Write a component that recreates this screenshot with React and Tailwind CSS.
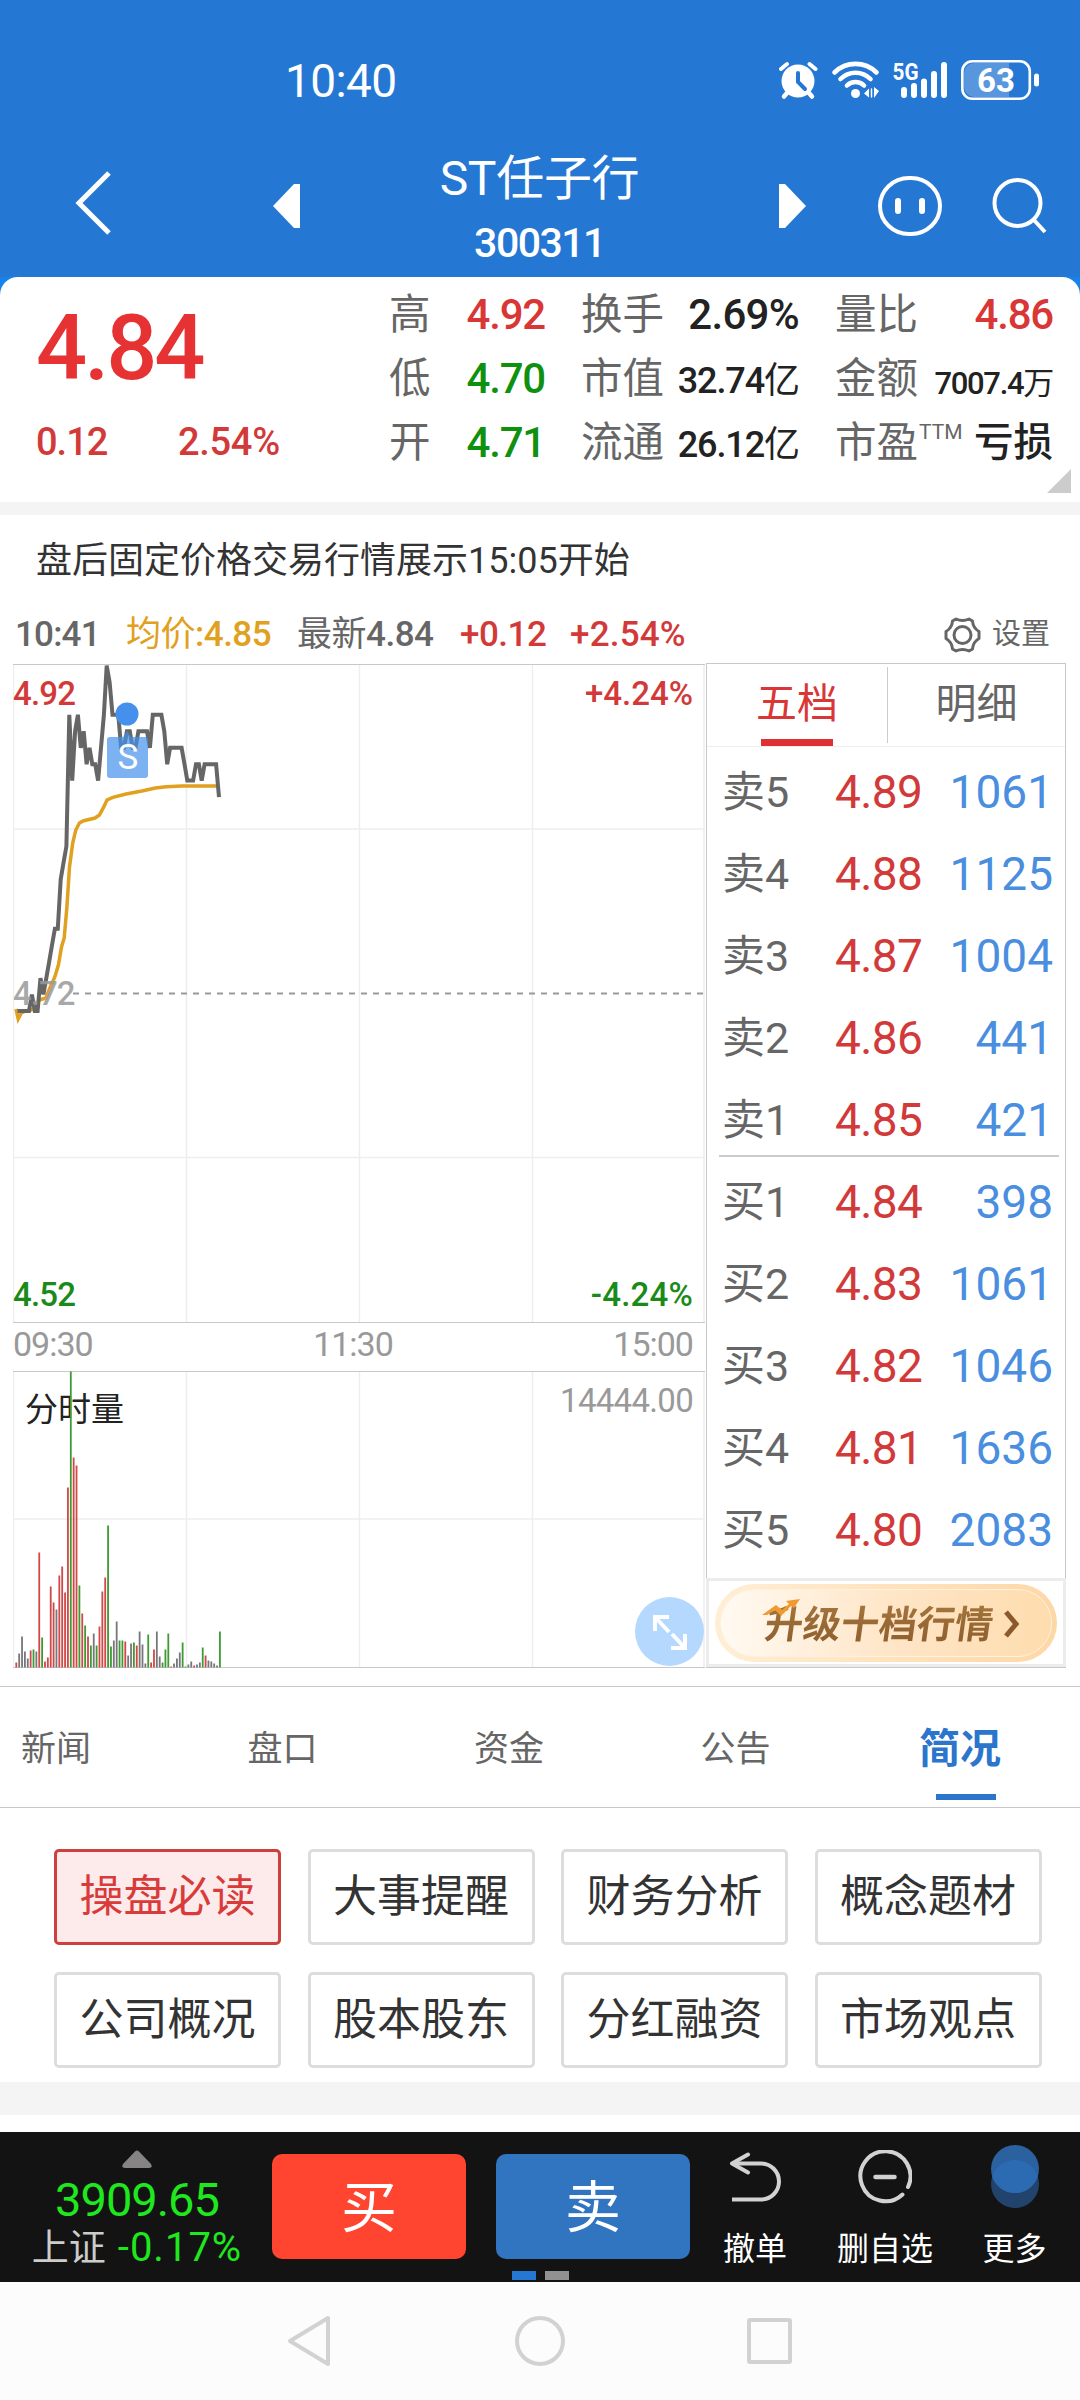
const asks = [
  { label: "卖5", price: "4.89", vol: "1061" },
  { label: "卖4", price: "4.88", vol: "1125" },
  { label: "卖3", price: "4.87", vol: "1004" },
  { label: "卖2", price: "4.86", vol: "441" },
  { label: "卖1", price: "4.85", vol: "421" },
];

const bids = [
  { label: "买1", price: "4.84", vol: "398" },
  { label: "买2", price: "4.83", vol: "1061" },
  { label: "买3", price: "4.82", vol: "1046" },
  { label: "买4", price: "4.81", vol: "1636" },
  { label: "买5", price: "4.80", vol: "2083" },
];

const tabs = ["新闻", "盘口", "资金", "公告"];

const topics = [
  "操盘必读", "大事提醒", "财务分析", "概念题材",
  "公司概况", "股本股东", "分红融资", "市场观点",
];

// one price per minute, in cents
const prices = [
  471, 471, 471, 471, 471, 472, 471, 471, 473, 472, 473, 474, 475, 476, 476, 479, 480, 481,
  489, 485, 488, 489, 487, 488, 486, 487, 486, 486, 485, 487, 489, 492, 491, 489, 489, 489,
  487, 487, 488, 488, 487, 487, 488, 488, 488, 488, 487, 489, 489, 489, 489, 488, 486, 487,
  487, 487, 487, 487, 486, 485, 485, 485, 486, 486, 485, 486, 486, 486, 486, 486, 484,
];

const avgLine =
  "3,345 5.2,355 8.3,349 12.8,347 18,346 22.6,344 26.2,336 32.9,334 37.3,323 41.8,313 45.4,301 48.5,283 51.2,274 53.9,243 56.5,203 59.7,179 62.8,166 66.4,159 70.8,156.7 82,154 86.4,151 90.9,142.7 94,136 99.8,133.3 113.2,130 128.9,127 142.3,124 153.4,122.7 169,122 206,122";

const R = "#d04848";
const G = "#3f9a34";
const N = "#77777b";

// [height, colour] per minute
const volumes = [
  [5, R], [14, N], [31, N], [16, N], [9, N], [17, R], [18, G], [16, N], [115, R], [30, G],
  [6, R], [10, R], [81, R], [65, R], [58, N], [92, R], [101, R], [75, R], [180, R], [296, G],
  [210, R], [202, R], [82, G], [54, R], [42, G], [31, R], [22, G], [34, N], [22, G], [41, R],
  [76, R], [90, R], [142, G], [21, G], [27, N], [46, N], [27, G], [27, G], [26, R], [12, N],
  [24, N], [25, G], [22, R], [36, N], [23, N], [4, N], [33, G], [5, R], [18, R], [36, N],
  [11, N], [5, G], [18, G], [34, G], [1, R], [4, N], [9, N], [15, N], [25, G], [1, G],
  [3, N], [6, N], [2, R], [3, N], [5, N], [20, G], [12, R], [7, N], [6, N], [4, N], [2, N], [36, G],
];

const STEP = 691 / 240;

function StatusBar() {
  return (
    <div className="mt-[50px] flex h-[60px] items-center pl-[285px]">
      <span className="w-[494px] pt-[2px] text-[46px] leading-none tracking-[-0.6px]">10:40</span>
      <svg width="260" height="52" viewBox="779 54 260 52" fill="none" stroke="#fff" strokeLinecap="round">
        {/* alarm */}
        <circle cx="798" cy="81" r="16.5" fill="#fff" stroke="none" />
        <path d="M781 69l6-5M815.500 69l-6-5" strokeWidth="4" />
        <path d="M787 93l-3 3.500M809 93l3 3.500" strokeWidth="4.500" />
        <path d="M798 73v9l7 7" stroke="#2577d4" strokeWidth="4" />
        {/* wifi */}
        <path d="M834.500 72.500a30 30 0 0 1 42 0M840.500 79a21 21 0 0 1 30 0M847 85.500a12 12 0 0 1 17 0" strokeWidth="4.600" />
        <circle cx="855.500" cy="93.500" r="4.500" fill="#fff" stroke="none" />
        <path d="M864 93.500l5-5v9zM879 91l-5-4v11z" fill="#fff" stroke="none" />
        <path d="M871.500 89v8" strokeWidth="1.500" />
        {/* signal */}
        <text x="892.500" y="80" fill="#fff" stroke="none" fontSize="24" fontWeight="700" textLength="26" lengthAdjust="spacingAndGlyphs">5G</text>
        <path d="M904 90v5M914 86v9M924 81.500v13.500M934 74v21M944 65v30" strokeWidth="6" />
        {/* battery */}
        <path d="M974 63h35v34h-35a10 10 0 0 1-10-10V73a10 10 0 0 1 10-10z" fill="#5897de" stroke="none" />
        <rect x="962.300" y="61.300" width="67.500" height="37.500" rx="10" strokeWidth="2.600" />
        <path d="M1036.500 76v8" strokeWidth="5" />
        <text x="996" y="92" fill="#fff" stroke="none" fontSize="33" fontWeight="700" textAnchor="middle">63</text>
      </svg>
    </div>
  );
}

function TitleBar() {
  return (
    <div className="flex h-[167px] items-center pt-[19px] pl-[73px]">
      <svg width="40" height="66" viewBox="0 0 40 66" fill="none" stroke="#fff" strokeWidth="5">
        <path d="M36 3L6 33l30 30" />
      </svg>
      <svg className="mt-[6px] ml-[160px]" width="27" height="44" viewBox="0 0 27 44" fill="#fff">
        <path d="M27 0h-6L0 22l21 22h6z" />
      </svg>
      <div className="mt-[15px] w-[479px] text-center leading-[65px]">
        <div className="text-[48px] tracking-[-0.3px]">ST任子行</div>
        <div className="text-[41px] font-medium tracking-[-1.5px]">300311</div>
      </div>
      <svg className="mt-[6px]" width="27" height="44" viewBox="0 0 27 44" fill="#fff">
        <path d="M0 0h6l21 22L6 44H0z" />
      </svg>
      <svg className="mt-[5px] ml-[71px]" width="66" height="62" viewBox="0 0 66 62" fill="none" stroke="#fff">
        <rect x="3" y="3" width="60" height="56" rx="29" strokeWidth="4" />
        <path d="M21 26v10M45 26v10" strokeWidth="6" strokeLinecap="round" />
      </svg>
      <svg className="mt-[3px] ml-[49px]" width="58" height="58" viewBox="0 0 58 58" fill="none" stroke="#fff" strokeWidth="4">
        <circle cx="25.500" cy="27" r="23" />
        <path d="M41 43l12 13" />
      </svg>
    </div>
  );
}

function Pair({ label, sup, children }) {
  return (
    <div className="flex h-16 items-center justify-between">
      <span className="text-[41.500px] font-normal tracking-normal text-[#666]">
        {label}
        {sup && <sup className="top-[-18px] ml-px inline-block text-[21px]">{sup}</sup>}
      </span>
      {children}
    </div>
  );
}

function Quote() {
  return (
    <section className="bg-[#1582ee]">
      <div className="relative flex h-[225px] rounded-t-[18px] bg-white pl-[36px] leading-none">
        <div className="w-[353px] text-[#e63232]">
          <div className="pt-[27px] text-[90px] font-medium tracking-[-3px]">4.84</div>
          <div className="mt-[29px] flex text-[38px] font-medium tracking-[-1px] text-[#d23a3a]">
            <span className="w-[142px]">0.12</span>
            <span className="tracking-[-0.3px]">2.54%</span>
          </div>
        </div>
        <div className="w-[156px] pt-[6px] text-[42px] font-medium tracking-[-1.2px] text-[#0f900f]">
          <Pair label="高">
            <span className="text-[#d93636]">4.92</span>
          </Pair>
          <Pair label="低">4.70</Pair>
          <Pair label="开">4.71</Pair>
        </div>
        <div className="ml-[36px] w-[218px] pt-[6px] text-[#222]">
          <Pair label="换手">
            <span className="text-[42px] font-medium tracking-[-0.7px]">2.69%</span>
          </Pair>
          <Pair label="市值">
            <span className="pt-1 text-[36px] tracking-[-1.1px]">
              <span className="font-medium">32.74</span>亿
            </span>
          </Pair>
          <Pair label="流通">
            <span className="pt-1 text-[36px] tracking-[-1.1px]">
              <span className="font-medium">26.12</span>亿
            </span>
          </Pair>
        </div>
        <div className="ml-[36px] w-[218px] pt-[6px] text-[#222]">
          <Pair label="量比">
            <span className="text-[42px] font-medium tracking-[-1.2px] text-[#d93636]">4.86</span>
          </Pair>
          <Pair label="金额">
            <span className="pt-2 text-[31px] tracking-[-1.3px]">
              <span className="font-medium">7007.4</span>万
            </span>
          </Pair>
          <Pair label="市盈" sup="TTM">
            <span className="text-[39.500px] font-medium">亏损</span>
          </Pair>
        </div>
        <svg className="absolute right-[9px] bottom-[9px]" width="24" height="24" viewBox="0 0 24 24" fill="#ccc">
          <path d="M24 0v24H0z" />
        </svg>
      </div>
    </section>
  );
}

function InfoRow() {
  return (
    <div className="flex h-[59px] items-center pt-[2px] pl-[15px] text-[35px] leading-none font-medium tracking-[-0.5px] whitespace-nowrap text-[#666]">
      <span className="w-[111px] tracking-[-0.8px]">10:41</span>
      <span className="w-[171px] text-[#e0a020]">
        <span className="font-normal">均价</span>:4.85
      </span>
      <span className="w-[163px]">
        <span className="font-normal">最新</span>4.84
      </span>
      <span className="w-[110px] text-[#d23a3a]">+0.12</span>
      <span className="tracking-[0.2px] text-[#d23a3a]">+2.54%</span>
      <div className="ml-auto flex items-center pr-[30px] text-[29px] font-normal tracking-normal">
        <svg className="mr-[11px]" width="37" height="36" viewBox="0 0 37 36" fill="none" stroke="#666" strokeWidth="3" strokeLinejoin="round">
          <path d="M12 2Q18.500 5 25 2L28.500 4Q29 11 35 14.500V21.500Q29 25 28.500 32L25 34Q18.500 31 12 34L8.500 32Q8 25 2 21.500V14.500Q8 11 8.500 4Z" />
          <circle cx="18.500" cy="18" r="8.500" />
        </svg>
        设置
      </div>
    </div>
  );
}

function PriceChart() {
  const line = prices
    .map((p, i) => `${(STEP * (i + 1) + 1.6).toFixed(1)},${((492 - p) * 16.45 + 1.5).toFixed(1)}`)
    .join(" ");

  return (
    <div className="relative h-[659px] text-[33px] leading-none font-medium tracking-[-0.8px]">
      <svg className="absolute inset-0" width="692" height="659" viewBox="0 0 692 659" fill="none">
        <path d="M.500 0v658M173.500 0v658M346.500 0v658M519.500 0v658M691 0v658M0 165h692M0 493.500h692" stroke="#eee" strokeWidth="1.500" />
        <path d="M0 .500h692M0 658.500h692" stroke="#c8c8c8" />
        <path d="M60 329.500h632" stroke="#999" strokeWidth="2" strokeDasharray="6 6" />
        <polyline points={avgLine} stroke="#e0a020" strokeWidth="3.500" />
        <polyline points={line} stroke="#666" strokeWidth="4" />
        <text x="0" y="341" fill="#999" fillOpacity=".85" fontSize="33" letterSpacing="-1">4.72</text>
        <circle cx="114" cy="50" r="11.500" fill="#4590ec" />
        <path d="M114 67l4 6h14a3 3 0 0 1 3 3v35a3 3 0 0 1-3 3h-35a3 3 0 0 1-3-3v-35a3 3 0 0 1 3-3h13z" fill="#4590ec" opacity=".7" />
        <text x="114.500" y="105" fill="#fff" fontSize="35" fontWeight="400" textAnchor="middle">S</text>
      </svg>
      <span className="absolute top-[13px] left-0 text-[#d23a3a]">4.92</span>
      <span className="absolute top-[13px] right-[12px] tracking-[0px] text-[#d23a3a]">+4.24%</span>
      <span className="absolute bottom-[12px] left-0 text-[#1a8a1a]">4.52</span>
      <span className="absolute right-[12px] bottom-[12px] tracking-[0.2px] text-[#1a8a1a]">-4.24%</span>
    </div>
  );
}

function VolumeChart() {
  return (
    <div className="relative h-[297px] leading-none">
      <svg className="absolute inset-0" width="692" height="297" viewBox="0 0 692 297" fill="none">
        <path d="M.500 0v296M173.500 0v296M346.500 0v296M519.500 0v296M691 0v296M0 148h692" stroke="#eee" strokeWidth="1.500" />
        <path d="M0 .500h692M0 296.500h692" stroke="#c8c8c8" />
        <text x="12" y="50" fill="#222" fontSize="33">分时量</text>
        {volumes.map(([h, color], i) => (
          <rect key={i} x={2.4 + i * 2.868} y={296.5 - h} width="1.8" height={h} fill={color} />
        ))}
      </svg>
      <span className="absolute top-[13px] right-[12px] text-[33px] tracking-[-0.7px] text-[#999]">14444.00</span>
      <div className="absolute right-px bottom-[2px] flex h-[69px] w-[69px] items-center justify-center rounded-full bg-[#b5d9fe]">
        <svg width="36" height="36" viewBox="0 0 36 36" fill="none" stroke="#fff" strokeWidth="4">
          <path d="M17 3H3v14M3 3l14 15M19 34h14V20M33 34L20 20" />
        </svg>
      </div>
    </div>
  );
}

function OrderRow({ label, price, vol }) {
  return (
    <div className="flex h-[82px] items-center pr-[12px] pl-[15px] text-[46px]">
      <span className="w-[113px] text-[43px] text-[#666]">{label}</span>
      <span className="tracking-[-0.6px] text-[#d23a3a]">{price}</span>
      <span className="ml-auto text-[#4a8edf]">{vol}</span>
    </div>
  );
}

function OrderBook() {
  return (
    <div className="flex w-[360px] flex-col border border-[#c8c8c8] leading-none">
      <div className="flex h-[83px] border-b border-[#eee] text-[41px] text-[#666]">
        <div className="flex w-[180px] flex-col items-center pt-[20px] text-[#d93636]">
          <span>五档</span>
          <div className="mt-auto h-[7px] w-[72px] bg-[#e03032]" />
        </div>
        <div className="my-[3px] flex flex-1 justify-center border-l border-[#ccc] pt-[17px]">明细</div>
      </div>
      <div className="h-[408px] pt-[4px]">
        {asks.map((r) => (
          <OrderRow key={r.label} {...r} />
        ))}
      </div>
      <div className="mr-[6px] ml-[12px] h-[2px] shrink-0 bg-[#ccc]" />
      <div className="h-[421px] pt-[4px]">
        {bids.map((r) => (
          <OrderRow key={r.label} {...r} />
        ))}
      </div>
      <div className="-mr-px -ml-px flex-1 border-[3px] border-[#ececec] px-[6px] pt-[3px]">
        <div className="h-[78px] rounded-full bg-gradient-to-r from-[#ffeed6] to-[#fed7a6] p-[5px]">
          <div className="relative flex h-full items-center rounded-full border border-[#fff2dc] bg-gradient-to-r from-[#fffaf2] via-[#ffe6c8] to-[#fedcae] pl-[44px]">
            <span className="mt-[3px] skew-x-[-8deg] bg-gradient-to-b from-[#a87840] to-[#8a5a2a] bg-clip-text py-2 text-[38px] font-bold text-transparent">
              升级十档行情
            </span>
            <svg className="mt-[2px] ml-[10px]" width="18" height="28" viewBox="0 0 18 28" fill="none" stroke="#8a5a2a" strokeWidth="5">
              <path d="M3 2l10 12L3 26" />
            </svg>
            <svg className="absolute top-[9px] left-[41px]" width="38" height="18" viewBox="0 0 38 18">
              <path d="M0 16L14 6l6 5 7-6-3-3L38 0l-6 9-3-2-10 10-6-6-8 5z" fill="#f09a30" />
            </svg>
          </div>
        </div>
      </div>
    </div>
  );
}

function BottomBar() {
  return (
    <footer className="h-[150px] bg-[#131313] leading-none">
      <div className="flex h-[139px]">
        <div className="flex w-[272px] flex-col items-center pt-[18px] pl-[2px]">
          <svg width="30" height="18" viewBox="0 0 30 18" fill="#858383">
            <path d="M13 1.500q2-2 4 0L29 14q2 4-2 4H3q-4 0-2-4z" />
          </svg>
          <div className="mt-[8px] text-[47px] tracking-[-1px] text-[#1fe81f]">3909.65</div>
          <div className="mt-[4px] flex items-center gap-[12px] pt-px text-[37px] text-[#ccc]">
            上证<span className="text-[40px] tracking-[1px] text-[#1fe81f]">-0.17%</span>
          </div>
        </div>
        <button className="mt-[22px] h-[105px] w-[194px] rounded-[10px] bg-[#ff4530] pt-[2px] text-[56px] text-white">买</button>
        <button className="mt-[22px] ml-[30px] h-[105px] w-[194px] rounded-[10px] bg-[#3174c0] pt-[2px] text-[56px] text-white">卖</button>
        <div className="flex flex-1 text-[32px] text-white">
          <div className="flex w-[130px] flex-col items-center pt-[20px]">
            <svg width="52" height="50" viewBox="0 0 52 50" fill="none" stroke="#d2d2d2" strokeWidth="4">
              <path d="M19 2.500L3 11.500l16 9" strokeLinecap="round" strokeLinejoin="round" />
              <path d="M3 11.500h29a18 18 0 0 1 0 36H3" />
            </svg>
            <span className="mt-[31px]">撤单</span>
          </div>
          <div className="flex w-[130px] flex-col items-center pt-[18px]">
            <svg width="54" height="54" viewBox="0 0 54 54" fill="none" stroke="#d2d2d2" strokeWidth="4" strokeLinecap="round">
              <path d="M44.500 44.500A25 25 0 1 1 50 37" />
              <path d="M17.500 27h19" strokeWidth="4.500" />
            </svg>
            <span className="mt-[29px]">删自选</span>
          </div>
          <div className="flex w-[129px] flex-col items-center pt-[13px]">
            <svg width="48" height="63" viewBox="0 0 48 63">
              <circle cx="24" cy="39" r="24" fill="#22446c" />
              <circle cx="24" cy="24" r="24" fill="#2b619f" />
              <path d="M1.200 31.500a24 24 0 0 1 45.600 0 24 24 0 0 1-45.600 0z" fill="#2c6ab2" />
            </svg>
            <span className="mt-[25px]">更多</span>
          </div>
        </div>
      </div>
      <div className="flex justify-center gap-[9px]">
        <div className="h-[9px] w-[24px] bg-[#2577d4]" />
        <div className="h-[9px] w-[24px] bg-[#919191]" />
      </div>
    </footer>
  );
}

export default function App() {
  return (
    <div className="h-[2400px] w-[1080px] overflow-hidden bg-white font-['Roboto','Noto_Sans_CJK_SC',sans-serif]">
      <header className="flex h-[277px] flex-col bg-[#2577d4] text-white">
        <StatusBar />
        <TitleBar />
      </header>
      <Quote />
      <div className="h-[13px] bg-[#f4f4f4]" />
      <div className="h-[89px] pt-[2px] pl-[36px] text-[36px] leading-[89px] text-[#333]">
        盘后固定价格交易行情展示15:05开始
      </div>
      <InfoRow />

      <section className="flex h-[1005px] pl-[13px]">
        <div className="w-[693px] pt-px pr-px">
          <PriceChart />
          <div className="flex h-[48px] items-center justify-between pr-[12px] pb-[7px] text-[34px] leading-none tracking-[-1px] text-[#999]">
            <span>09:30</span>
            <span>11:30</span>
            <span>15:00</span>
          </div>
          <VolumeChart />
        </div>
        <OrderBook />
      </section>

      <nav className="mt-[18px] flex h-[122px] border-y border-[#c8c8c8] pl-[21px] text-[35px] leading-none text-[#666]">
        {tabs.map((t) => (
          <span key={t} className="w-[226.500px] pt-[45px]">{t}</span>
        ))}
        <div className="-ml-[8px] flex flex-col text-[41px] font-bold text-[#2b76cc]">
          <span className="pt-[42px]">简况</span>
          <div className="mt-auto mb-[7px] ml-[17px] h-[6px] w-[60px] bg-[#2b76cc]" />
        </div>
      </nav>

      <div className="grid h-[274px] grid-cols-[repeat(4,227px)] grid-rows-[96px_96px] gap-x-[26.500px] gap-y-[27px] pt-[41px] pl-[54px] text-[44px] text-[#333]">
        {topics.map((t, i) => (
          <button
            key={t}
            className={[
              "rounded-[5px] border-[3px] leading-none",
              i === 0 ? "border-[#cc4040] bg-[#fdeaea] text-[#d93a3a]" : "border-[#ddd]",
            ].join(" ")}
          >
            {t}
          </button>
        ))}
      </div>
      <div className="h-[33px] bg-[#f4f4f4]" />
      <div className="h-[17px]" />

      <BottomBar />

      <div className="flex h-[118px] items-center bg-[#fcfcfc] pl-[287px]">
        <svg width="505" height="52" viewBox="0 0 505 52" fill="none" stroke="#d2d2d2" strokeWidth="4" strokeLinejoin="round">
          <path d="M41 3L3 26l38 23z" />
          <circle cx="253" cy="26" r="23" />
          <rect x="462" y="5" width="41" height="42" rx="1" />
        </svg>
      </div>
    </div>
  );
}
